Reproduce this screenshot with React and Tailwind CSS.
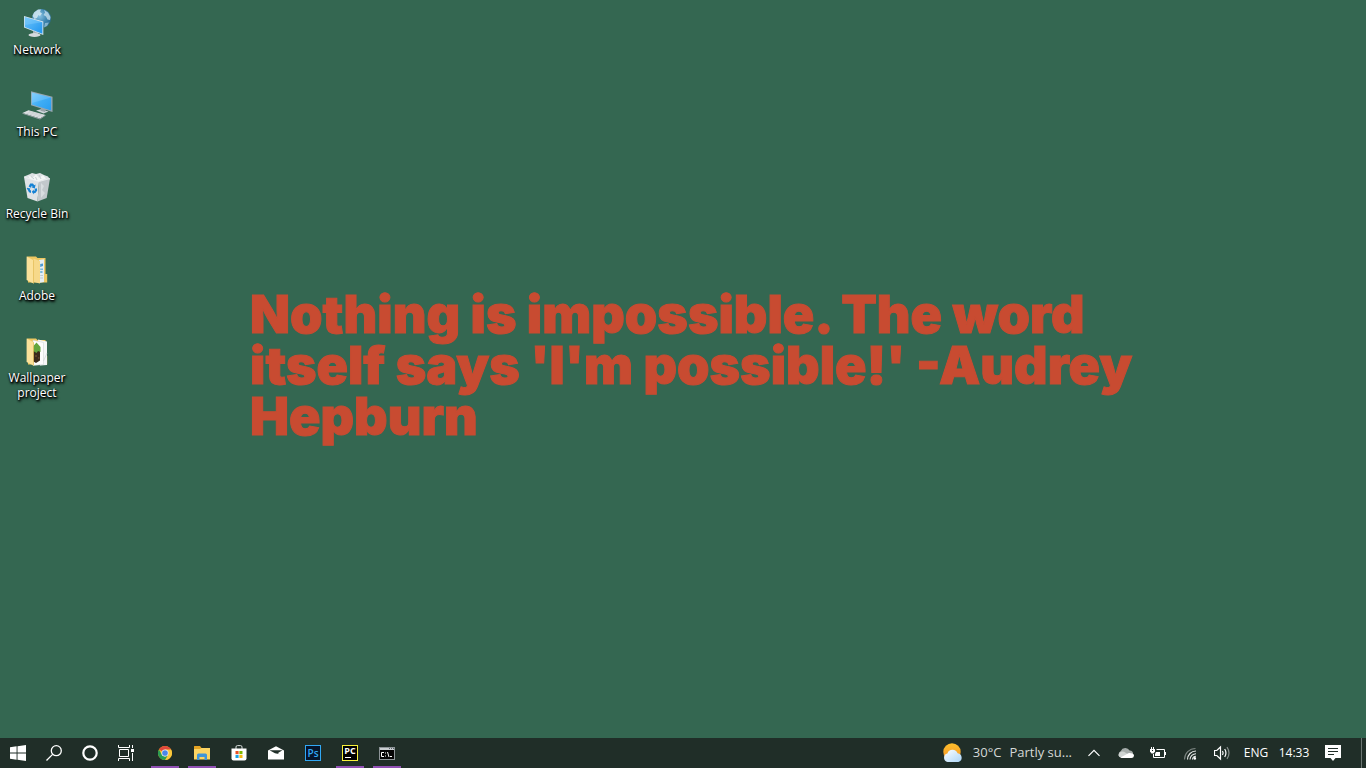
import React from "react";

function NetworkIcon() {
  return (
    <svg width="32" height="32" viewBox="0 0 32 32" aria-hidden="true">
      <defs>
        <radialGradient id="globe" cx="0.4" cy="0.35" r="0.75">
          <stop offset="0" stopColor="#8cc6e6" />
          <stop offset="0.5" stopColor="#4189b4" />
          <stop offset="1" stopColor="#1f6288" />
        </radialGradient>
        <linearGradient id="netScreen" x1="0" y1="0" x2="1" y2="1">
          <stop offset="0" stopColor="#6cc4fb" />
          <stop offset="1" stopColor="#1f94ee" />
        </linearGradient>
      </defs>
      <circle cx="20.5" cy="11.5" r="9.5" fill="url(#globe)" />
      <path d="M13 5.5 L17 2.6 L20 2.4 L19 5 L21 6.5 L19 9 L17.5 8 L16 11 L13.5 12 L11.5 9Z" fill="#d5e9f2" opacity="0.85" />
      <path d="M23 3 L27 5.5 L29.5 10 L29 13 L26.5 12.5 L25 9.5 L22.5 8 L24 5.5Z" fill="#c3dfec" opacity="0.8" />
      <path d="M24 16 L28 15.5 L26 19 L23 20.5Z" fill="#a8cfdf" opacity="0.7" />
      <path d="M12 24 L17 25.5 L17.5 28 L12 27Z" fill="#aab3b8" />
      <ellipse cx="13.5" cy="28" rx="6" ry="1.9" fill="#d5dadd" />
      <path d="M3 9 L22.3 14.6 V28 L3 20.6Z" fill="#d9e6ee" />
      <path d="M3.8 10.1 L21.4 15.3 V26.7 L3.8 20Z" fill="url(#netScreen)" />
      <path d="M3.8 10.1 L21.4 15.3 L3.8 18Z" fill="#8fd3fc" opacity="0.35" />
    </svg>
  );
}

function ThisPcIcon() {
  return (
    <svg width="32" height="32" viewBox="0 0 32 32" aria-hidden="true">
      <defs>
        <linearGradient id="pcScreen" x1="0" y1="0" x2="1" y2="1">
          <stop offset="0" stopColor="#79cbfb" />
          <stop offset="0.5" stopColor="#3fadf5" />
          <stop offset="1" stopColor="#2a9df0" />
        </linearGradient>
      </defs>
      <path d="M15 21.5 L20 20.3 L27.5 22.5 L22.5 24.4Z" fill="#cfd5d9" />
      <path d="M20 18.5 L25 20 L24 23 L19.5 21.8Z" fill="#9aa4aa" />
      <path d="M10 2.2 L31.5 7.8 V23 L10 16.3Z" fill="#9aa8b0" />
      <path d="M10.8 3.4 L30.2 8.4 V21.5 L10.8 15.6Z" fill="url(#pcScreen)" />
      <path d="M10.8 3.4 L30.2 8.4 L10.8 14Z" fill="#a0dcff" opacity="0.3" />
      <path d="M1.5 24 L7.5 21.3 L24.5 26 L19 29.6Z" fill="#e3e6e8" />
      <path d="M1.5 24 L19 29.6 V30.4 L1.5 24.8Z M19 29.6 L24.5 26 V26.8 L19 30.4Z" fill="#98a1a6" />
      <path d="M4.5 23.9 L19.2 28.2 M6.3 23 L21 27.2 M8 22.3 L22.5 26.3" stroke="#b4bbbf" strokeWidth="0.5" fill="none" />
    </svg>
  );
}

function RecycleIcon() {
  return (
    <svg width="32" height="32" viewBox="0 0 32 32" aria-hidden="true">
      <path d="M3 5.5 L8 3.5 L11 2 L15 3 L19 2 L23 4 L27 5.5 L29 8.5 L19 12 L5 8Z" fill="#dde1e4" />
      <path d="M7 4.5 L12 6.5 L15 3.2 L18 7 L22 4 L25 7.5 L17 10.5 L9 8Z" fill="#f4f6f6" />
      <path d="M10 5.5 L13 8 M18 4 L20 8 M14.5 6 L16 9" stroke="#bcc4c9" strokeWidth="0.8" />
      <path d="M3 6 L18 10.5 L16.5 30.5 L6.5 27Z" fill="#dfe3e6" />
      <path d="M18 10.5 L29 7.5 L25.7 27 L16.5 30.5Z" fill="#c2c8cc" />
      <path d="M20 12 L23 15 L21 19 L24 22 L20 27Z" fill="#d8dde0" />
      <path d="M3 6 L18 10.5 L29 7.5" fill="none" stroke="#f0f3f4" strokeWidth="0.8" />
      <path d="M7.6 15.6 L9.2 12.6 H12 L13.2 14.2 L14.6 13.6 L13.8 17.4 L10.4 16.2 L11.6 15.4 L10.8 14.8 L9.8 16.8Z" fill="#1682d4" />
      <path d="M13.6 17.8 L15.8 17.2 L16.2 19.6 L14.4 22 L12.8 22.2 V23.4 L10.8 20.8 L12.8 18.6 V20 L13.8 19.6Z" fill="#1682d4" />
      <path d="M6 16.8 L9.4 17.6 L8.8 18.4 L10 19.8 V22 L8 21.2 L6.6 18.4 L5.8 18Z" fill="#1682d4" />
    </svg>
  );
}

function FolderIcon({ children }) {
  return (
    <svg width="32" height="32" viewBox="0 0 32 32" aria-hidden="true">
      <path d="M6 3.4 H15 L16.5 5 H24.5 V21 H26.2 V29.5 H7Z" fill="#edc761" />
      {children}
      <path d="M5.6 3.6 L12.5 7.2 V30.6 L5.6 27Z" fill="#fbe19a" />
      <path d="M12.5 7.2 V30.6" stroke="#e2bb57" strokeWidth="0.7" />
    </svg>
  );
}

function AdobeFolderIcon() {
  return (
    <FolderIcon>
      <path d="M18 7 L23 6.2 V29 L18 30Z" fill="#e5edf2" />
      <path d="M19.2 11 L22 10.5 V13 L19.2 14Z" fill="#4d9ad0" />
      <path d="M19.2 15.5 H22 V17 H19.2Z M19.2 18 H21.5 V20 H19.2Z" fill="#79b7da" />
      <path d="M19.2 22.5 H22 M19.2 25 H22" stroke="#b4c0c8" strokeWidth="0.8" />
      <path d="M12.5 5.4 L19 8 V30.5 L12.5 29Z" fill="#f7d98a" />
    </FolderIcon>
  );
}

function WallpaperFolderIcon() {
  return (
    <FolderIcon>
      <path d="M17 4.6 L26 6.5 V30 L19 30.5Z" fill="#f6f7f7" />
      <path d="M12 5.2 L22.5 7.5 V29.5 L12 30.5Z" fill="#fdfdfd" stroke="#cdd2d3" strokeWidth="0.5" />
      <path d="M11.5 14 L19 15 V25.5 L15 28 L11.5 26Z" fill="#3a281b" />
      <path d="M11.5 12 L15.5 7.5 L19.5 12 V17 L17 16 L15.5 18 L11.5 15.5Z" fill="#63a53e" />
      <path d="M14 20 h2 v2 h-2z M17 22 h1.5 v2 h-1.5z" fill="#5b4029" />
      <path d="M22.5 26 L26 18" stroke="#c9cfd0" strokeWidth="0.6" />
    </FolderIcon>
  );
}

const desktopItems = [
  { label: "Network", Icon: NetworkIcon },
  { label: "This PC", Icon: ThisPcIcon },
  { label: "Recycle Bin", Icon: RecycleIcon },
  { label: "Adobe", Icon: AdobeFolderIcon },
  { label: "Wallpaper project", Icon: WallpaperFolderIcon },
];

function WindowsIcon() {
  return (
    <svg width="16" height="16" viewBox="0 0 16 16" fill="#fff" aria-hidden="true">
      <path d="M0 2.2 L6.6 1.3 V7.5 H0Z M7.5 1.2 L16 0 V7.5 H7.5Z M0 8.4 H6.6 V14.7 L0 13.8Z M7.5 8.4 H16 V16 L7.5 14.8Z" />
    </svg>
  );
}

function SearchIcon() {
  return (
    <svg width="16" height="16" viewBox="0 0 16 16" fill="none" stroke="#fff" strokeWidth="1.3" aria-hidden="true">
      <circle cx="10.3" cy="5.7" r="5" />
      <path d="M6.6 9.4 L0.5 15.5" />
    </svg>
  );
}

function CortanaIcon() {
  return (
    <svg width="16" height="16" viewBox="0 0 16 16" fill="none" aria-hidden="true">
      <circle cx="8" cy="8" r="6.7" stroke="#fff" strokeWidth="2.2" />
    </svg>
  );
}

function TaskViewIcon() {
  return (
    <svg width="16" height="16" viewBox="0 0 16 16" fill="none" stroke="#fff" aria-hidden="true">
      <path d="M0.5 0 V2.5 H11.5 V0 M0.5 16 V13.5 H11.5 V16 M1.5 4.5 H10.5 V11.5 H1.5Z M14.5 0 V3 M14.5 8 V16" />
      <path d="M13 4 H16 V7 H13Z" fill="#fff" stroke="none" />
    </svg>
  );
}

function ChromeIcon() {
  return (
    <svg width="16" height="16" viewBox="0 0 48 48" aria-hidden="true">
      <circle cx="24" cy="24" r="21" fill="#fbc116" />
      <path d="M24 24 L5.8 13.5 A21 21 0 0 1 42.2 13.5Z" fill="#e0483c" />
      <path d="M24 13.5 H42.2 A21 21 0 0 1 24 45 L33.5 29.5Z" fill="#fbc83c" />
      <path d="M5.8 13.5 A21 21 0 0 0 24 45 L33.5 29.5 L24 35 L14.5 29.5Z" fill="#279c54" />
      <circle cx="24" cy="24" r="10.5" fill="#f4f6f6" />
      <circle cx="24" cy="24" r="8.5" fill="#4a86e8" />
    </svg>
  );
}

function ExplorerIcon() {
  return (
    <svg width="16" height="16" viewBox="0 0 16 16" aria-hidden="true">
      <path d="M0 1.5 Q0 1 0.5 1 H6 L7.5 3 H16 V6 H0Z" fill="#e4a323" />
      <path d="M0 4 H6 L7.5 3 H16 V14.5 H0Z" fill="#fcd462" />
      <path d="M3 15 V10 Q3 8.5 4.5 8.5 H11.5 Q13 8.5 13 10 V15 H10.5 V12 H5.5 V15Z" fill="#3f95d8" />
    </svg>
  );
}

function StoreIcon() {
  return (
    <svg width="16" height="16" viewBox="0 0 16 16" aria-hidden="true">
      <path d="M5 4 V2 Q5 0.6 6.4 0.6 H9.6 Q11 0.6 11 2 V4" fill="none" stroke="#d8dedc" />
      <path d="M0.5 3.5 H15.5 V13.5 Q15.5 15.5 13.5 15.5 H2.5 Q0.5 15.5 0.5 13.5Z" fill="#fff" />
      <path d="M4.5 6 H7.6 V9.1 H4.5Z" fill="#e95125" />
      <path d="M8.4 6 H11.5 V9.1 H8.4Z" fill="#80b900" />
      <path d="M4.5 9.9 H7.6 V13 H4.5Z" fill="#19a2e8" />
      <path d="M8.4 9.9 H11.5 V13 H8.4Z" fill="#f8b813" />
    </svg>
  );
}

function MailIcon() {
  return (
    <svg width="16" height="16" viewBox="0 0 16 16" fill="#fff" aria-hidden="true">
      <path d="M0 5.5 L8 1.2 L16 5.5 V14.5 H0Z" />
      <path d="M1.5 5.2 H14.5 L9.6 8.2 L11.8 9.2 L7 8.2Z" fill="#202e28" />
    </svg>
  );
}

function PhotoshopIcon() {
  return (
    <svg width="16" height="16" viewBox="0 0 16 16" aria-hidden="true">
      <rect x="0.5" y="0.5" width="15" height="15" fill="#06142a" stroke="#31a8f5" />
      <text x="8" y="11.5" textAnchor="middle" fill="#31a8f5" className="font-['Open_Sans',sans-serif] text-[10px] font-semibold">Ps</text>
    </svg>
  );
}

function PycharmIcon() {
  return (
    <svg width="16" height="16" viewBox="0 0 16 16" aria-hidden="true">
      <rect x="0.5" y="0.5" width="15" height="15" fill="#000" stroke="#f8f13a" />
      <text x="8" y="9" textAnchor="middle" fill="#fff" className="font-['Open_Sans',sans-serif] text-[9px] font-bold">PC</text>
      <path d="M3 12.5 H9" stroke="#fff" />
    </svg>
  );
}

function TerminalIcon() {
  return (
    <svg width="16" height="16" viewBox="0 0 16 16" aria-hidden="true">
      <rect x="0.5" y="2.5" width="15" height="12" fill="#050505" stroke="#8d9498" />
      <path d="M1 3 H15 V5 H1Z" fill="#c9ced1" />
      <path d="M10 3.5 h1 M12 3.5 h1 M14 3.5 h1" stroke="#596067" />
      <g fill="none" stroke="#fff">
        <path d="M5 7.5 H2.5 V11.5 H5" />
        <path d="M6.5 7.5 v1 M6.5 10.5 v1 M8.5 7 L10 12 M11 11.5 h2" />
      </g>
    </svg>
  );
}

const systemButtons = [
  { label: "Start", Icon: WindowsIcon },
  { label: "Search", Icon: SearchIcon },
  { label: "Cortana", Icon: CortanaIcon },
  { label: "Task View", Icon: TaskViewIcon },
];

const apps = [
  { label: "Google Chrome", Icon: ChromeIcon, running: true },
  { label: "File Explorer", Icon: ExplorerIcon, running: true },
  { label: "Microsoft Store", Icon: StoreIcon },
  { label: "Mail", Icon: MailIcon },
  { label: "Photoshop", Icon: PhotoshopIcon },
  { label: "PyCharm", Icon: PycharmIcon, running: true },
  { label: "Command Prompt", Icon: TerminalIcon, running: true },
];

function WeatherIcon() {
  return (
    <svg width="20" height="20" viewBox="0 0 20 20" aria-hidden="true">
      <defs>
        <linearGradient id="sun" x1="0" y1="0" x2="0" y2="1">
          <stop offset="0" stopColor="#fdbf2b" />
          <stop offset="1" stopColor="#f5932a" />
        </linearGradient>
        <linearGradient id="weatherCloud" x1="0" y1="0" x2="1" y2="1">
          <stop offset="0" stopColor="#ffffff" />
          <stop offset="1" stopColor="#abd5f8" />
        </linearGradient>
      </defs>
      <circle cx="9" cy="9" r="8.7" fill="url(#sun)" />
      <path d="M4.6 19 A4.4 4.4 0 0 1 4.4 10.4 A5.4 5.4 0 0 1 14.6 10.2 A4.5 4.5 0 0 1 15.4 19Z" fill="url(#weatherCloud)" />
    </svg>
  );
}

function ChevronIcon() {
  return (
    <svg width="16" height="16" viewBox="0 0 16 16" fill="none" stroke="#fff" strokeWidth="1.2" aria-hidden="true">
      <path d="M2.5 10.8 L8 5.3 L13.5 10.8" />
    </svg>
  );
}

function CloudIcon() {
  return (
    <svg width="16" height="16" viewBox="0 0 16 16" aria-hidden="true">
      <path d="M3.6 12.8 A3.6 3.6 0 0 1 2.8 6 A4.9 4.9 0 0 1 11.6 5.6 Q15.2 6 15 9 L8 12.8Z" fill="#a5acaa" />
      <path d="M0.4 10.5 Q0.8 7 4 6.6 Q6.2 6.6 8 8 L13.5 11 L4 12.8 Q1 12.5 0.4 10.5Z" fill="#cfd4d2" />
      <path d="M2.4 12.5 L9 9 Q11 7.2 13 8.3 Q16 8.5 16 10.8 Q15.7 13 13.5 13 H4Z" fill="#fff" />
    </svg>
  );
}

function BatteryIcon() {
  return (
    <svg width="16" height="16" viewBox="0 0 16 16" fill="none" stroke="#fff" aria-hidden="true">
      <path d="M6.5 4.5 H14.5 V12.5 H3.5 V9" />
      <path d="M15.5 7 V10" />
      <path d="M6 7 H10 V11 H5 V9Z" fill="#fff" stroke="none" />
      <path d="M0 4 H5 V6.5 L3.5 8.5 H1.5 L0 6.5Z" fill="#fff" stroke="none" />
      <path d="M1.5 2 V4 M3.5 2 V4" />
      <path d="M2 5 H3 V6 H2Z" fill="#202e28" stroke="none" />
    </svg>
  );
}

function WifiIcon() {
  return (
    <svg width="16" height="16" viewBox="0 0 16 16" fill="none" stroke="#e8ebea" strokeWidth="1.1" aria-hidden="true">
      <path d="M2.5 14.5 A11 11 0 0 1 13.5 3.5" opacity="0.45" />
      <path d="M5.5 14.5 A8.5 8.5 0 0 1 14 6" />
      <path d="M8 14.5 A6 6 0 0 1 14 8.7" />
      <path d="M10.5 14.5 A3.5 3.5 0 0 1 14 11.2" />
      <circle cx="12.8" cy="13.4" r="1.3" fill="#fff" stroke="none" />
    </svg>
  );
}

function VolumeIcon() {
  return (
    <svg width="16" height="16" viewBox="0 0 16 16" fill="none" stroke="#fff" strokeWidth="1.2" aria-hidden="true">
      <path d="M0.5 5.5 H2.8 L6.5 2 V14 L2.8 10.5 H0.5Z" />
      <path d="M8.5 6 Q9.8 8 8.5 10" />
      <path d="M10.7 4 Q13.2 8 10.7 12" />
      <path d="M13 2.2 Q17 8 13 13.8" opacity="0.45" />
    </svg>
  );
}

function NotificationIcon() {
  return (
    <svg width="16" height="16" viewBox="0 0 16 16" aria-hidden="true">
      <path d="M0 0 H16 V13 H10.5 L8 16 L5.5 13 H0Z" fill="#fff" />
      <path d="M3 3.5 H13 M3 6.5 H13 M3 9.5 H9" stroke="#202e28" />
    </svg>
  );
}

const trayButtons = [
  { label: "Show hidden icons", Icon: ChevronIcon },
  { label: "OneDrive", Icon: CloudIcon },
  { label: "Battery", Icon: BatteryIcon },
  { label: "Wi-Fi", Icon: WifiIcon },
  { label: "Volume", Icon: VolumeIcon },
];

export default function App() {
  return (
    <div className="flex min-h-screen flex-col bg-[#346751] font-['Open_Sans','Noto_Sans',sans-serif]">
      <main className="flex flex-1">
        <nav aria-label="Desktop" className="flex w-[74px] shrink-0 flex-col">
          {desktopItems.map(({ label, Icon }) => (
            <button key={label} type="button" className="flex min-h-[82px] flex-col items-center gap-[3px] pt-[7px]">
              <Icon />
              <span className="text-center text-[12px] leading-[15px] text-white [text-shadow:1px_1px_2px_#000,0_1px_2px_#000,1px_2px_3px_#000]">{label}</span>
            </button>
          ))}
        </nav>
        <section className="flex flex-1 items-center pb-2 pl-[176px]">
          <h1 className="font-['Inter',sans-serif] text-[52px] leading-[51px] font-black text-[#c84b31] [-webkit-text-stroke:1px_#c84b31]">
            <span className="block whitespace-nowrap">Nothing is impossible. The word</span>
            <span className="block whitespace-nowrap">itself says 'I'm possible!' -Audrey</span>
            <span className="block whitespace-nowrap">Hepburn</span>
          </h1>
        </section>
      </main>

      <footer className="flex h-[30px] items-stretch justify-between bg-[#202e28]">
        <div className="flex gap-[2px]">
          <div className="flex">
            {systemButtons.map(({ label, Icon }) => (
              <button key={label} type="button" aria-label={label} className="flex w-9 items-center justify-center">
                <Icon />
              </button>
            ))}
          </div>
          <div className="flex">
            {apps.map(({ label, Icon, running }) => (
              <button
                key={label}
                type="button"
                aria-label={label}
                className="flex w-[37px] flex-col items-center justify-between pt-[7px]"
              >
                <Icon />
                <span className={running ? "h-[2px] w-7 bg-[#9150b4]" : "h-[2px] w-7"} />
              </button>
            ))}
          </div>
        </div>

        <div className="flex items-stretch text-white">
          <button type="button" className="flex items-center gap-2 pr-[6px] text-[13px] text-[#d5d9d7]">
            <WeatherIcon />
            <span className="pl-[2px]">30°C</span>
            <span>Partly su...</span>
          </button>
          {trayButtons.map(({ label, Icon }) => (
            <button key={label} type="button" aria-label={label} className="flex w-8 items-center justify-center">
              <Icon />
            </button>
          ))}
          <button type="button" className="w-9 text-center text-[12px]">ENG</button>
          <button type="button" className="w-10 text-center text-[12px]">14:33</button>
          <button type="button" aria-label="Notifications" className="mr-[9px] flex w-[38px] items-center justify-center">
            <NotificationIcon />
          </button>
          <button type="button" aria-label="Show desktop" className="w-[5px] border-l border-[#6b7672]" />
        </div>
      </footer>
    </div>
  );
}
